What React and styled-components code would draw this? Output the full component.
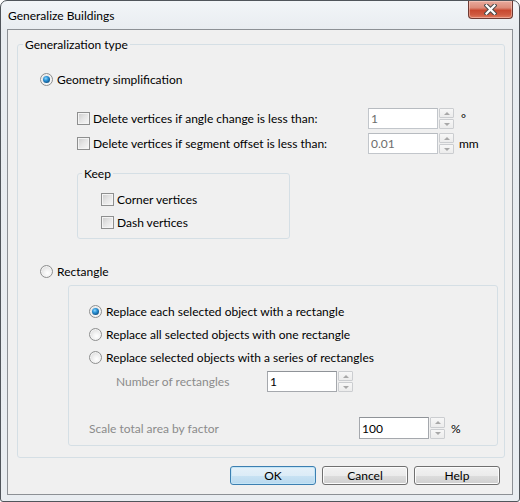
import React from 'react';
import styled, { createGlobalStyle } from 'styled-components';

const GlobalStyle = createGlobalStyle`
  html, body {
    margin: 0;
    padding: 0;
    background: #ffffff;
  }
  body {
    font-family: Lato, "Noto Sans", sans-serif;
    font-size: 12px;
    color: #000000;
  }
  * { box-sizing: border-box; }
`;

function CloseGlyph() {
  return (
    <svg width="13" height="11" viewBox="0 0 13 11">
      <path d="M2.5 1.5 L10.5 9.5 M10.5 1.5 L2.5 9.5" stroke="#4a4a4a" strokeWidth="4.2" strokeLinecap="square" />
      <path d="M2.5 1.5 L10.5 9.5 M10.5 1.5 L2.5 9.5" stroke="#ffffff" strokeWidth="2.2" strokeLinecap="square" />
    </svg>
  );
}

function Radio({ checked, label }) {
  return (
    <RadioLabel>
      <RadioCircle>{checked && <RadioDot />}</RadioCircle>
      <span>{label}</span>
    </RadioLabel>
  );
}

function Check({ label, width }) {
  return (
    <CheckLabel $width={width}>
      <CheckBox />
      <span>{label}</span>
    </CheckLabel>
  );
}

function SpinInput({ value, disabled, height }) {
  return (
    <Spin>
      <SpinBox $disabled={disabled} $h={height}>{value}</SpinBox>
      <SpinButtons $h={height}>
        <SpinBtn><Arrow /></SpinBtn>
        <SpinBtn><Arrow $down /></SpinBtn>
      </SpinButtons>
    </Spin>
  );
}

export default function App() {
  return (
    <>
      <GlobalStyle />
      <Window>
        <TitleBar>
          <Title>Generalize Buildings</Title>
          <CloseButton><CloseGlyph /></CloseButton>
        </TitleBar>
        <Client>
          <Group>
            <Legend>Generalization type</Legend>
            <Row $mt={17} $pl={22}>
              <Radio checked label="Geometry simplification" />
            </Row>
            <Row $mt={19} $h={21} $pl={59}>
              <Check width={291} label="Delete vertices if angle change is less than:" />
              <SpinInput value="1" disabled height={21} />
              <Unit $ml={7}>°</Unit>
            </Row>
            <Row $mt={4} $h={21} $pl={59}>
              <Check width={291} label="Delete vertices if segment offset is less than:" />
              <SpinInput value="0.01" disabled height={21} />
              <Unit $ml={5}>mm</Unit>
            </Row>
            <KeepGroup>
              <Legend $ml={4}>Keep</Legend>
              <Row $mt={8} $pl={23}>
                <Check label="Corner vertices" />
              </Row>
              <Row $mt={3} $pl={23}>
                <Check label="Dash vertices" />
              </Row>
            </KeepGroup>
            <Row $mt={22} $pl={22}>
              <Radio label="Rectangle" />
            </Row>
            <Panel>
              <Row $pl={20}>
                <Radio checked label="Replace each selected object with a rectangle" />
              </Row>
              <Row $mt={3} $pl={20}>
                <Radio label="Replace all selected objects with one rectangle" />
              </Row>
              <Row $mt={3} $pl={20}>
                <Radio label="Replace selected objects with a series of rectangles" />
              </Row>
              <Row $mt={4} $h={21} $pl={47}>
                <MutedLabel $width={151}>Number of rectangles</MutedLabel>
                <SpinInput value="1" height={21} />
              </Row>
              <Row $mt={25} $h={22} $pl={20}>
                <MutedLabel $width={270}>Scale total area by factor</MutedLabel>
                <SpinInput value="100" height={22} />
                <Unit $ml={6}>%</Unit>
              </Row>
            </Panel>
          </Group>
          <ButtonBar>
            <Button $default>OK</Button>
            <Button>Cancel</Button>
            <Button>Help</Button>
          </ButtonBar>
        </Client>
      </Window>
    </>
  );
}

const Window = styled.div`
  width: 520px;
  height: 502px;
  border: 1px solid #50555b;
  border-radius: 7px 7px 3px 3px;
  background: linear-gradient(180deg, #f2f5f8 0%, #e8ecf0 6%, #e9edf1 100%);
  display: flex;
  flex-direction: column;
  padding: 0 6px 6px;
  overflow: hidden;
`;

const TitleBar = styled.div`
  height: 28px;
  display: flex;
  justify-content: space-between;
  align-items: flex-start;
`;

const Title = styled.div`
  padding: 7px 0 0 1px;
  line-height: 15px;
  font-size: 12px;
  color: #000;
`;

const CloseButton = styled.div`
  width: 45px;
  height: 18px;
  border: 1px solid #6e3a33;
  border-top: none;
  border-radius: 0 0 4px 4px;
  background: linear-gradient(180deg, #e9ab9d 0%, #dc8b79 40%, #c8482f 55%, #cf5a40 80%, #e07b5f 100%);
  box-shadow: inset 0 0 0 1px rgba(255, 220, 210, 0.45);
  display: flex;
  align-items: center;
  justify-content: center;
`;

const Client = styled.div`
  flex: 1;
  border: 1px solid #8c9095;
  background: #f0f0f0;
  display: flex;
  flex-direction: column;
  padding: 7px 7px 0 9px;
`;

const Group = styled.fieldset`
  margin: 0;
  padding: 0 0 11px;
  min-width: 0;
  border: 1px solid #d5dfe5;
  border-radius: 3px;
  display: flex;
  flex-direction: column;
`;

const Legend = styled.legend`
  margin-left: ${p => p.$ml ?? 5}px;
  padding: 0 2px;
  line-height: 15px;
  font-size: 12px;
`;

const KeepGroup = styled(Group)`
  margin: 12px 0 0 59px;
  width: 213px;
  padding: 0 0 6px;
`;

const Panel = styled.div`
  margin: 4px 6px 0 50px;
  border: 1px solid #d5dfe5;
  border-radius: 3px;
  padding: 15px 0 6px;
  display: flex;
  flex-direction: column;
`;

const Row = styled.div`
  display: flex;
  align-items: center;
  height: ${p => p.$h || 20}px;
  margin-top: ${p => p.$mt || 0}px;
  padding-left: ${p => p.$pl || 0}px;
  flex-shrink: 0;
`;

const RadioLabel = styled.label`
  display: flex;
  align-items: center;
  gap: 4px;
  white-space: nowrap;
`;

const RadioCircle = styled.span`
  width: 13px;
  height: 13px;
  border-radius: 50%;
  border: 1px solid #8e8f8f;
  background: radial-gradient(circle at 60% 65%, #ffffff 0%, #f2f2f2 35%, #d2d2d2 100%);
  box-shadow: inset 0 0 0 1px #f4f4f4;
  display: flex;
  align-items: center;
  justify-content: center;
  flex-shrink: 0;
`;

const RadioDot = styled.span`
  width: 7px;
  height: 7px;
  border-radius: 50%;
  background: radial-gradient(circle at 40% 35%, #8fd6fb 0%, #2d95d9 35%, #135c93 70%, #0c3b5f 100%);
`;

const CheckLabel = styled.label`
  display: flex;
  align-items: center;
  gap: 3px;
  white-space: nowrap;
  width: ${p => (p.$width ? `${p.$width}px` : 'auto')};
  flex-shrink: 0;
`;

const CheckBox = styled.span`
  width: 13px;
  height: 13px;
  border: 1px solid #8e8f8f;
  background: linear-gradient(135deg, #cbcbcb 0%, #e6e6e6 50%, #f8f8f8 100%);
  box-shadow: inset 0 0 0 1px #f4f4f4;
  flex-shrink: 0;
`;

const MutedLabel = styled.span`
  color: #8b8b8b;
  width: ${p => p.$width}px;
  flex-shrink: 0;
  white-space: nowrap;
`;

const Spin = styled.div`
  display: flex;
  align-items: stretch;
  gap: 1px;
`;

const SpinBox = styled.div`
  width: 70px;
  height: ${p => p.$h}px;
  background: #ffffff;
  border: 1px solid ${p => (p.$disabled ? '#c2c6cb' : '#a5a8ad')};
  border-top-color: ${p => (p.$disabled ? '#b7bbc0' : '#8f9398')};
  color: ${p => (p.$disabled ? '#6d6d6d' : '#000000')};
  padding: 0 2px;
  display: flex;
  align-items: center;
  line-height: 15px;
`;

const SpinButtons = styled.div`
  width: 15px;
  height: ${p => p.$h}px;
  display: flex;
  flex-direction: column;
  gap: 1px;
`;

const SpinBtn = styled.div`
  flex: 1;
  border: 1px solid #cbcdd0;
  border-radius: 1px;
  background: linear-gradient(180deg, #f7f7f7 0%, #ececec 100%);
  display: flex;
  align-items: center;
  justify-content: center;
`;

const Arrow = styled.span`
  width: 0;
  height: 0;
  border-left: 3px solid transparent;
  border-right: 3px solid transparent;
  ${p => (p.$down ? 'border-top: 3px solid #a8a8a8;' : 'border-bottom: 3px solid #a8a8a8;')}
`;

const Unit = styled.span`
  margin-left: ${p => p.$ml}px;
`;

const ButtonBar = styled.div`
  display: flex;
  justify-content: flex-end;
  gap: 6px;
  margin-top: 8px;
  padding-right: 5px;
`;

const Button = styled.div`
  width: 86px;
  height: 19px;
  border: 1px solid ${p => (p.$default ? '#3c7fb1' : '#707070')};
  border-radius: 3px;
  background: ${p =>
    p.$default
      ? 'linear-gradient(180deg, #e5f1f9 0%, #dcecf7 50%, #c8e2f3 51%, #b9d9ef 100%)'
      : 'linear-gradient(180deg, #f2f2f2 0%, #ebebeb 50%, #dddddd 51%, #cfcfcf 100%)'};
  box-shadow: inset 0 0 0 1px ${p => (p.$default ? '#c4e5f6' : '#fcfcfc')};
  display: flex;
  align-items: center;
  justify-content: center;
  line-height: 15px;
`;
